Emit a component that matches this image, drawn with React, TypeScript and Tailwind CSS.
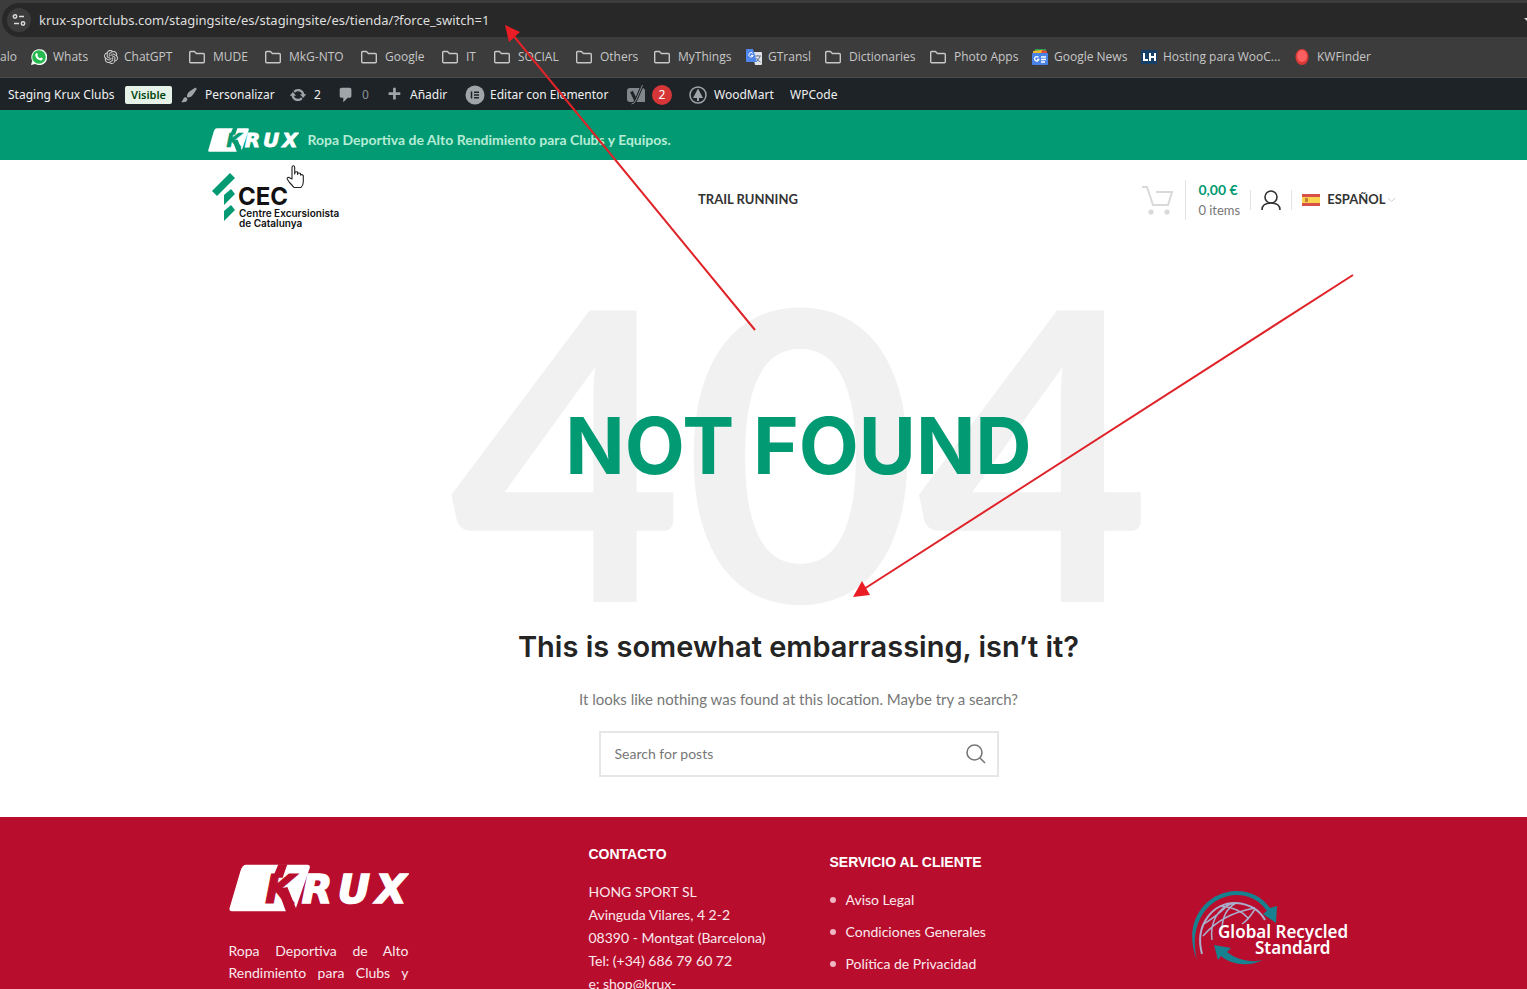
import React from 'react';
import type { ReactNode } from 'react';
import { SiOpenai } from 'react-icons/si';

const FolderIcon = () => (
  <svg className="h-4 w-4" viewBox="0 0 16 16" fill="none" stroke="#c7c7c7" strokeWidth="1.4">
    <path d="M.7 12.8V3.4q0-.9.9-.9h3.8l2 2h7q.9 0 .9.9v7.4q0 .9-.9.9H1.6q-.9 0-.9-.9z" />
  </svg>
);

const WhatsIcon = () => (
  <svg className="h-4 w-4" viewBox="0 0 16 16">
    <path d="M0 16l1.200-4.200A8 8 0 1 1 4.200 15z" fill="#f2fbf4" />
    <circle cx="8" cy="8" r="6.800" fill="#25b94f" />
    <path
      d="M5.200 4.200q.8-.6 1.200.3l.5 1.200q.1.400-.6 1.100 1 1.900 2.700 2.600l.9-1q1.500.5 1.900 1-.2 2-2 2.100-4.500-.8-5.600-5.200 0-1.300 1-2.100z"
      fill="#fff"
    />
  </svg>
);

const TranslateIcon = () => (
  <svg className="h-4 w-4" viewBox="0 0 16 16">
    <path d="M6 3h9q1 0 1 1v11q0 1-1 1H9z" fill="#dfe3e8" />
    <path d="M9 7h6M12 6v1M14 7q-1 4-4 6M10.500 9q1 3 4 4" stroke="#6d7c92" strokeWidth="1" fill="none" />
    <path d="M1 0h6l4 13H1q-1 0-1-1V1q0-1 1-1z" fill="#4f86ec" />
    <path d="M6.800 4.400a2.200 2.200 0 1 0 .4 2H5" stroke="#fff" strokeWidth="1" fill="none" />
  </svg>
);

const NewsIcon = () => (
  <svg className="h-4 w-4" viewBox="0 0 16 16">
    <path d="M3 0h11v5H3z" fill="#2f9e50" />
    <path d="M1 2l9-1 1 4H1z" fill="#f4b92f" />
    <path d="M10 1l5 1v3H9z" fill="#dd4b3e" />
    <rect y="4" width="16" height="12" rx="1" fill="#4a83e8" />
    <path
      d="M6.500 8.400a2.200 2.200 0 1 0 .4 2H5M9 8h5M9 10.500h5M9 13h4"
      stroke="#fff"
      strokeWidth="1.300"
      fill="none"
    />
  </svg>
);

const HostingIcon = () => (
  <svg className="h-4 w-4" viewBox="0 0 16 16">
    <rect y="1" width="16" height="14" fill="#153f66" />
    <path d="M3 4v7h4M9 4v4h5M14 4v8M9 8v4" stroke="#fff" strokeWidth="2" fill="none" />
  </svg>
);

const FinderIcon = () => (
  <svg className="h-4 w-4" viewBox="0 0 16 16">
    <ellipse cx="7" cy="8" rx="6.500" ry="8" fill="#d93a36" />
    <ellipse cx="7" cy="7" rx="5" ry="6" fill="#fb5f60" />
  </svg>
);

type Bookmark = { label: string; width: string; icon?: ReactNode };

const bookmarks: Bookmark[] = [
  { label: 'Whats', width: 'w-[73px]', icon: <WhatsIcon /> },
  { label: 'ChatGPT', width: 'w-[85px]', icon: <SiOpenai className="h-[14px] w-[14px] text-[#d8d8d8]" /> },
  { label: 'MUDE', width: 'w-[76px]' },
  { label: 'MkG-NTO', width: 'w-[96px]' },
  { label: 'Google', width: 'w-[81px]' },
  { label: 'IT', width: 'w-[52px]' },
  { label: 'SOCIAL', width: 'w-[82px]' },
  { label: 'Others', width: 'w-[78px]' },
  { label: 'MyThings', width: 'w-[92px]' },
  { label: 'GTransl', width: 'w-[79px]', icon: <TranslateIcon /> },
  { label: 'Dictionaries', width: 'w-[105px]' },
  { label: 'Photo Apps', width: 'w-[102px]' },
  { label: 'Google News', width: 'w-[109px]', icon: <NewsIcon /> },
  { label: 'Hosting para WooC...', width: 'w-[154px]', icon: <HostingIcon /> },
  { label: 'KWFinder', width: 'w-[90px]', icon: <FinderIcon /> },
];

const BrowserBar = () => (
  <div className="border-b border-[#4a4a4a] bg-[#3c3c3c] pt-[3px] font-['Open_Sans','Noto_Sans',sans-serif]">
    <div className="ml-[2px] flex h-[34px] items-center rounded-l-full bg-[#282828] pl-[5px]">
      <button
        type="button"
        aria-label="Site information"
        className="flex h-6 w-6 items-center justify-center rounded-full bg-[#3c3c3c]"
      >
        <svg className="h-4 w-4" viewBox="0 0 16 16" fill="none" stroke="#dcdcdc" strokeWidth="1.500">
          <circle cx="4" cy="4.500" r="1.700" />
          <path d="M8 4.500h5M3 11.500h5" />
          <circle cx="12" cy="11.500" r="1.700" />
        </svg>
      </button>
      <input
        type="text"
        aria-label="Address"
        readOnly
        value="krux-sportclubs.com/stagingsite/es/stagingsite/es/tienda/?force_switch=1"
        className="ml-2 min-w-0 flex-1 bg-transparent pt-px font-['Noto_Sans',sans-serif] text-[13px] text-[#dedede] outline-none"
      />
    </div>
    <nav className="flex h-10 items-center overflow-hidden text-xs whitespace-nowrap text-[#c7c7c7]">
      <a href="#" className="w-[31px] shrink-0">
        alo
      </a>
      {bookmarks.map((b) => (
        <a key={b.label} href="#" className={`flex shrink-0 items-center ${b.width} ${b.icon ? 'gap-[6px]' : 'gap-2'}`}>
          {b.icon ?? <FolderIcon />}
          <span>{b.label}</span>
        </a>
      ))}
    </nav>
  </div>
);

const Dashicon = ({ d }: { d: string }) => (
  <svg className="h-[18px] w-[18px]" viewBox="0 0 20 20" fill="#a0a5aa">
    <path d={d} />
  </svg>
);

const BRUSH =
  'M18.33 3.57s.27-.8-.31-1.36c-.53-.52-1.22-.24-1.22-.24-.61.3-5.76 3.47-7.67 5.57-.86.96-2.06 3.79-1.09 4.82.92.98 3.96-.17 4.79-1 2.06-2.06 5.21-7.17 5.5-7.79zM1.4 17.65c2.37-1.56 1.46-3.41 3.23-4.64.93-.65 2.22-.62 3.08.29.63.67.8 2.57-.16 3.46-1.57 1.45-4 1.55-6.15.89z';
const UPDATE =
  'M10.2 3.28c3.53 0 6.43 2.61 6.92 6h2.08l-3.5 4-3.5-4h2.32c-.45-1.97-2.21-3.45-4.32-3.45-1.45 0-2.73.71-3.54 1.78L4.95 5.66C6.23 4.2 8.11 3.28 10.2 3.28zm-.4 13.44c-3.52 0-6.43-2.61-6.92-6H.8l3.5-4c1.17 1.33 2.33 2.67 3.5 4H5.48c.45 1.97 2.21 3.45 4.32 3.45 1.45 0 2.73-.71 3.54-1.78l1.71 1.95c-1.28 1.46-3.15 2.38-5.25 2.38z';
const COMMENT =
  'M5 2h9q.82 0 1.41.59T16 4v7q0 .82-.59 1.41T14 13h-2l-5 5v-5H5q-.82 0-1.41-.59T3 11V4q0-.82.59-1.41T5 2z';
const PLUS = 'M17 7v3h-5v5H9v-5H4V7h5V2h3v5h5z';

const AdminBar = () => (
  <nav className="flex h-8 items-center overflow-hidden bg-[#1d2327] pt-[2px] pl-2 font-['Noto_Sans',sans-serif] text-xs whitespace-nowrap text-[#f0f0f1]">
    <a href="#" className="flex w-[172px] shrink-0 items-center justify-between pr-2">
      <span>Staging Krux Clubs</span>
      <span className="rounded-xs bg-[#e6f2e8] px-[6px] text-[11px] leading-[18px] font-semibold text-[#00450c]">
        Visible
      </span>
    </a>
    <a href="#" className="flex w-[109px] shrink-0 items-center gap-[7px]">
      <Dashicon d={BRUSH} />
      <span>Personalizar</span>
    </a>
    <a href="#" className="flex w-12 shrink-0 items-center gap-[7px]">
      <Dashicon d={UPDATE} />
      <span>2</span>
    </a>
    <a href="#" className="flex w-12 shrink-0 items-center gap-[7px]">
      <Dashicon d={COMMENT} />
      <span className="text-[#8c9196]">0</span>
    </a>
    <a href="#" className="flex w-20 shrink-0 items-center gap-[7px]">
      <Dashicon d={PLUS} />
      <span>Añadir</span>
    </a>
    <a href="#" className="flex w-[162px] shrink-0 items-center gap-[5px]">
      <svg className="h-5 w-5" viewBox="0 0 20 20">
        <circle cx="10" cy="10" r="9.500" fill="#a0a5aa" />
        <path d="M6.500 6.500v7M9 7.200h5M9 10h5M9 12.800h5" stroke="#1d2327" strokeWidth="1.500" />
      </svg>
      <span>Editar con Elementor</span>
    </a>
    <a href="#" className="flex w-[62px] shrink-0 items-center gap-[7px]">
      <svg className="h-5 w-[18px]" viewBox="0 0 18 20">
        <path d="M3 3h12q3 0 3 3v11H3q-3 0-3-3V6q0-3 3-3z" fill="#82878c" />
        <path d="M4.500 6.500l4 8.500M15.500 0L9 15q-1.500 4-4.500 4" stroke="#1d2327" strokeWidth="3" fill="none" />
        <path d="M15.500 0L9 15q-1.500 4-4.500 4" stroke="#82878c" strokeWidth="1" fill="none" />
      </svg>
      <span className="flex h-5 w-5 items-center justify-center rounded-full bg-[#d63638] text-white">2</span>
    </a>
    <a href="#" className="flex w-[101px] shrink-0 items-center gap-[7px]">
      <svg className="h-[18px] w-[18px]" viewBox="0 0 18 18">
        <circle cx="9" cy="9" r="8" fill="none" stroke="#a0a5aa" strokeWidth="1.500" />
        <path d="M9 2.500l5 9.500h-4v3H8v-3H4z" fill="#a0a5aa" />
      </svg>
      <span>WoodMart</span>
    </a>
    <a href="#">WPCode</a>
  </nav>
);

// The "K" is knocked out of the panel, so it takes the colour behind the logo
const KruxLogo = ({ className, back }: { className: string; back: string }) => (
  <svg
    className={className}
    viewBox="0 0 540 142"
    role="img"
    aria-label="Krux"
    fontSize="119"
    fontWeight="700"
    fontStyle="italic"
    fontFamily="DejaVu Sans, sans-serif"
  >
    <path d="M52 1H235Q245 1 242 12L200 133L171 141H8Q-1 141 2 130L35 18Q40 1 52 1Z" fill="#fff" />
    <g fill={back}>
      <path d="M148 0h27l-14 40h-30zM146 74l29-6 27 66-8 8h-23z" />
      <text x="108" y="115" stroke={back} strokeWidth="3">
        K
      </text>
    </g>
    <text x="218 326 440" y="115" fill="#fff" stroke="#fff" strokeWidth="5">
      RUX
    </text>
  </svg>
);

const ClubLogo = () => (
  <svg className="h-14 w-[132px]" viewBox="0 0 132 56" fontFamily="Inter, sans-serif" fill="#111">
    <g fill="#029a72">
      <path d="M18 0l5 5L5 23 0 18z" />
      <path d="M19 16l4 5L12 32V22z" />
      <path d="M19 32l4 5L12 48V38z" />
    </g>
    <text x="26" y="32" fontSize="24" fontWeight="700">CEC</text>
    <text x="27" y="44" fontSize="10" fontWeight="600">Centre Excursionista</text>
    <text x="27" y="54" fontSize="10" fontWeight="600">de Catalunya</text>
  </svg>
);

const SiteHeader = () => (
  <header>
    <div className="bg-[#029a72] pl-[70px]">
      <div className="mx-auto flex h-[50px] max-w-[1222px] items-center gap-[9px] px-5 pt-[10px]">
        <KruxLogo className="h-6 w-[91px]" back="#029a72" />
        <p className="text-sm font-bold text-[#b5ecd6]">
          Ropa Deportiva de Alto Rendimiento para Clubs y Equipos.
        </p>
      </div>
    </div>
    <div className="pl-[70px]">
      <div className="mx-auto flex h-20 max-w-[1222px] items-center pr-[15px] pl-6">
        <a href="#" className="w-[143px] pt-px">
          <ClubLogo />
        </a>
        <nav className="flex flex-1 justify-center">
          <a href="#" className="text-[13px] font-bold text-[#333]">
            TRAIL RUNNING
          </a>
        </nav>
        <div className="flex items-center">
          <a href="#" className="flex items-center" aria-label="Cart">
            <svg className="mr-3 h-[30px] w-8" viewBox="0 0 32 30" fill="none" stroke="#d9d9d9" strokeWidth="2">
              <path d="M1 2h5l6 18h15l4-13H15" />
              <g fill="#d9d9d9" stroke="none">
                <circle cx="10" cy="27" r="2.600" />
                <circle cx="26" cy="27" r="2.600" />
              </g>
            </svg>
            <span className="flex h-10 flex-col justify-center border-l border-[#e3e3e3] pl-3">
              <span className="text-sm leading-5 font-bold text-[#029a72]">0,00 €</span>
              <span className="text-[13px] leading-5 text-[#777]">0 items</span>
            </span>
          </a>
          <a href="#" aria-label="Account" className="ml-[10px] border-x border-[#e3e3e3] px-[10px]">
            <svg className="h-5 w-5" viewBox="0 0 20 20" fill="none" stroke="#333" strokeWidth="1.600">
              <circle cx="10" cy="7" r="6" />
              <path d="M1 20c0-5 4-7 9-7s9 2 9 7" />
            </svg>
          </a>
          <button type="button" className="ml-[10px] flex items-center text-[13px] font-bold text-[#333]">
            <svg className="mr-[7px] h-3 w-[18px]" viewBox="0 0 18 12">
              <path d="M0 0h18v12H0z" fill="#d8504a" />
              <path d="M0 3h18v6H0z" fill="#fcd34d" />
              <path d="M3 4h3v4H3z" fill="#cf7b3a" />
            </svg>
            ESPAÑOL
            <svg className="ml-[2px] h-2 w-[7px]" viewBox="0 0 7 8" fill="none" stroke="#ccc">
              <path d="M0 2l3.500 3.500L7 2" />
            </svg>
          </button>
        </div>
      </div>
    </div>
  </header>
);

const NotFound = () => (
  <main className="flex flex-col items-center pt-[25px] pb-10 pl-[70px] text-center">
    <div className="grid place-items-center">
      <span className="col-start-1 row-start-1 pl-1 text-[403px] leading-[362px] font-bold text-[#f1f1f1]">404</span>
      <h1 className="col-start-1 row-start-1 font-['Inter',sans-serif] text-[78px] leading-[84px] font-bold text-[#029a72]">
        NOT FOUND
      </h1>
    </div>
    <h3 className="font-['Inter',sans-serif] text-[29px] leading-10 font-semibold text-[#242424]">
      This is somewhat embarrassing, isn’t it?
    </h3>
    <p className="mt-5 text-[15px] leading-6 text-[#777]">
      It looks like nothing was found at this location. Maybe try a search?
    </p>
    <form className="mt-5 flex h-[46px] w-full max-w-[400px] items-center border-2 border-[#e6e6e6] pr-[11px]">
      <input
        type="search"
        aria-label="Search for posts"
        placeholder="Search for posts"
        className="min-w-0 flex-1 px-[14px] text-sm outline-none placeholder:text-[#777]"
      />
      <button type="submit" aria-label="Search">
        <svg className="h-5 w-5" viewBox="0 0 20 20" fill="none" stroke="#777" strokeWidth="1.600">
          <circle cx="8.500" cy="8.500" r="7.500" />
          <path d="M14 14l5 5" />
        </svg>
      </button>
    </form>
  </main>
);

const RecycledBadge = () => (
  <svg className="h-[76px] w-40" viewBox="0 0 160 76" role="img" aria-label="Global Recycled Standard">
    <g fill="none" stroke="#a9aecd" strokeWidth="1.500">
      <path d="M12 64C4 34 24 12 46 13c14 1 24 8 29 17" strokeWidth="2" />
      <path d="M22 50c-2-16 4-32 22-37M32 40c0-12 5-22 14-27M14 34c12-8 20-14 24-20M13 46c14-16 30-24 52-28M30 16c12 1 22 5 28 12M52 34c6-4 10-10 13-15" />
    </g>
    <g fill="#17818f">
      <path d="M7 70C-8 34 14 2 46 1c16 0 27 7 34 17l7-2-1 17-13-9 4-3C70 11 60 5 46 5 18 6-2 34 7 70z" />
      <path d="M24 55l17 3-4 4c10 8 24 11 36 8-14 7-32 5-42-4l-3 4z" />
    </g>
    <g fill="#fff" fontFamily="Noto Sans, sans-serif" fontWeight="600" fontSize="17">
      <text x="28" y="48">Global Recycled</text>
      <text x="65" y="64">Standard</text>
    </g>
  </svg>
);

const services = ['Aviso Legal', 'Condiciones Generales', 'Política de Privacidad'];

const SiteFooter = () => (
  <footer className="flex-1 overflow-hidden bg-[#b80d2d] pl-[70px] text-sm text-[#fbe9ed]">
    <div className="mx-auto grid max-w-[1222px] grid-cols-[360px_241px_1fr_auto] items-start pr-[60px] pl-[41px]">
      <div className="w-[180px] pt-[47px]">
        <KruxLogo className="h-[48px] w-[180px]" back="#b80d2d" />
        <p className="mt-7 text-justify leading-[22px]">
          Ropa Deportiva de Alto Rendimiento para Clubs y Equipos.
        </p>
      </div>
      <div className="pt-[27px]">
        <h4 className="font-['Liberation_Sans',sans-serif] text-sm leading-5 font-bold text-white">CONTACTO</h4>
        <address className="mt-4 w-[180px] leading-[23px] not-italic">
          HONG SPORT SL
          <br />
          Avinguda Vilares, 4 2-2
          <br />
          08390 - Montgat (Barcelona)
          <br />
          Tel: (+34) 686 79 60 72
          <br />
          e: shop@krux-
        </address>
      </div>
      <div className="pt-[35px]">
        <h4 className="font-['Liberation_Sans',sans-serif] text-sm leading-5 font-bold text-white">
          SERVICIO AL CLIENTE
        </h4>
        <ul className="mt-[17px] space-y-[10px] leading-[22px]">
          {services.map((s) => (
            <li key={s} className="flex items-center gap-[10px]">
              <span className="h-[6px] w-[6px] rounded-full bg-[#f0b6c3]" />
              <a href="#">{s}</a>
            </li>
          ))}
        </ul>
      </div>
      <div className="pt-[73px]">
        <RecycledBadge />
      </div>
    </div>
  </footer>
);

// Arrows and pointer drawn over the page
const Annotations = () => (
  <>
    <svg className="pointer-events-none absolute top-0 left-0" width="1527" height="989" aria-hidden="true">
      <g stroke="#df2329" strokeWidth="2" fill="none">
        <path d="M755 330L512 34M1353 275L864 589" />
      </g>
      <g fill="#ea1c24">
        <path d="M505 25l4 17 11-10z" />
        <path d="M853 597l9-16 8 14z" />
      </g>
      <path d="M1524 18h3v3z" fill="#dcdcdc" />
    </svg>
    <svg
      className="pointer-events-none absolute top-[165px] left-[286px] h-6 w-[18px]"
      viewBox="0 0 18 24"
      fill="#fff"
      stroke="#222"
      strokeWidth="1.100"
      strokeLinejoin="round"
      aria-hidden="true"
    >
      <path d="M6 14V2.500Q6 .8 7.300.8T8.700 2.500V9q0-3 2.900-2V9.500q.5-2.500 2.900-1V10q1.500-1 2.800.5V17q0 3-2.300 5.500H8Q6 20 3.500 17.500L1.200 14Q1 12 3 12.500z" />
    </svg>
  </>
);

export default function App() {
  return (
    <div className="relative flex h-screen flex-col overflow-hidden bg-white font-['Lato',sans-serif]">
      <BrowserBar />
      <AdminBar />
      <SiteHeader />
      <NotFound />
      <SiteFooter />
      <Annotations />
    </div>
  );
}
